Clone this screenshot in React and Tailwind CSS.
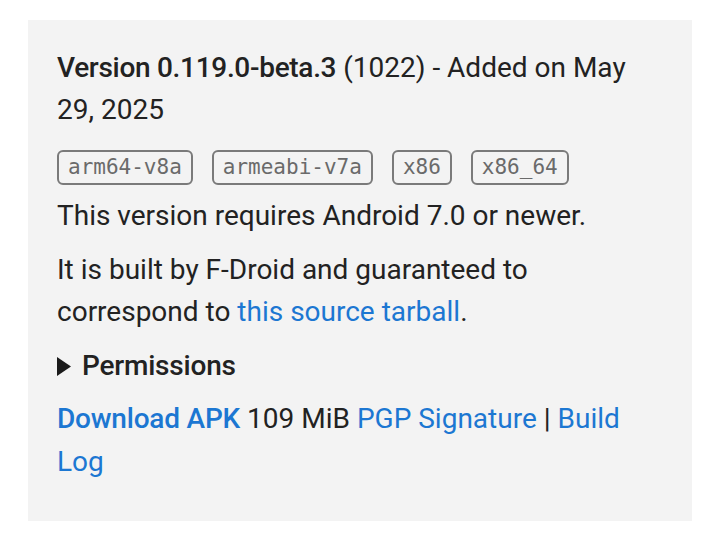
import React from 'react';

const archs = ['arm64-v8a', 'armeabi-v7a', 'x86', 'x86_64'];

export default function App() {
  return (
    <div className="min-h-[547px] bg-white pt-[20px] pl-[28px]" style={{ fontFamily: 'Roboto, "Noto Sans", sans-serif' }}>
      <div className="w-[664px] h-[501px] bg-[#f3f3f3] px-[29px] pt-[27px] text-[28px] leading-[42px] text-[#222]">
        <p>
          <span className="font-medium tracking-[-0.3px]">Version 0.119.0-beta.3</span> (1022) - Added on May 29, 2025
        </p>
        <div className="flex gap-[19px] mt-[19px] mb-[10px]">
          {archs.map(a => (
            <span
              key={a}
              className="h-[35px] px-[9px] flex items-center border-2 border-[#7a7a7a] rounded-[6px] text-[21px] leading-none text-[#6a6a6a]"
              style={{ fontFamily: '"DejaVu Sans Mono", monospace' }}
            >
              {a}
            </span>
          ))}
        </div>
        <p>This version requires Android 7.0 or newer.</p>
        <p className="mt-[12px]">
          It is built by F-Droid and guaranteed to correspond to{' '}
          <a className="text-[#1c77d2]">this source tarball</a>.
        </p>
        <div className="mt-[12px] flex items-center font-medium">
          <svg width="14" height="19" viewBox="0 0 14 19" className="mr-[11px]">
            <polygon points="0,0 14,9.5 0,19" fill="#1a1a1a" />
          </svg>
          <span className="tracking-[-0.2px]">Permissions</span>
        </div>
        <p className="mt-[10px] leading-[43px]">
          <a className="text-[#1c77d2] font-medium tracking-[-0.2px]">Download APK</a> 109 MiB{' '}
          <a className="text-[#1c77d2]">PGP Signature</a> | <a className="text-[#1c77d2]">Build Log</a>
        </p>
      </div>
    </div>
  );
}
